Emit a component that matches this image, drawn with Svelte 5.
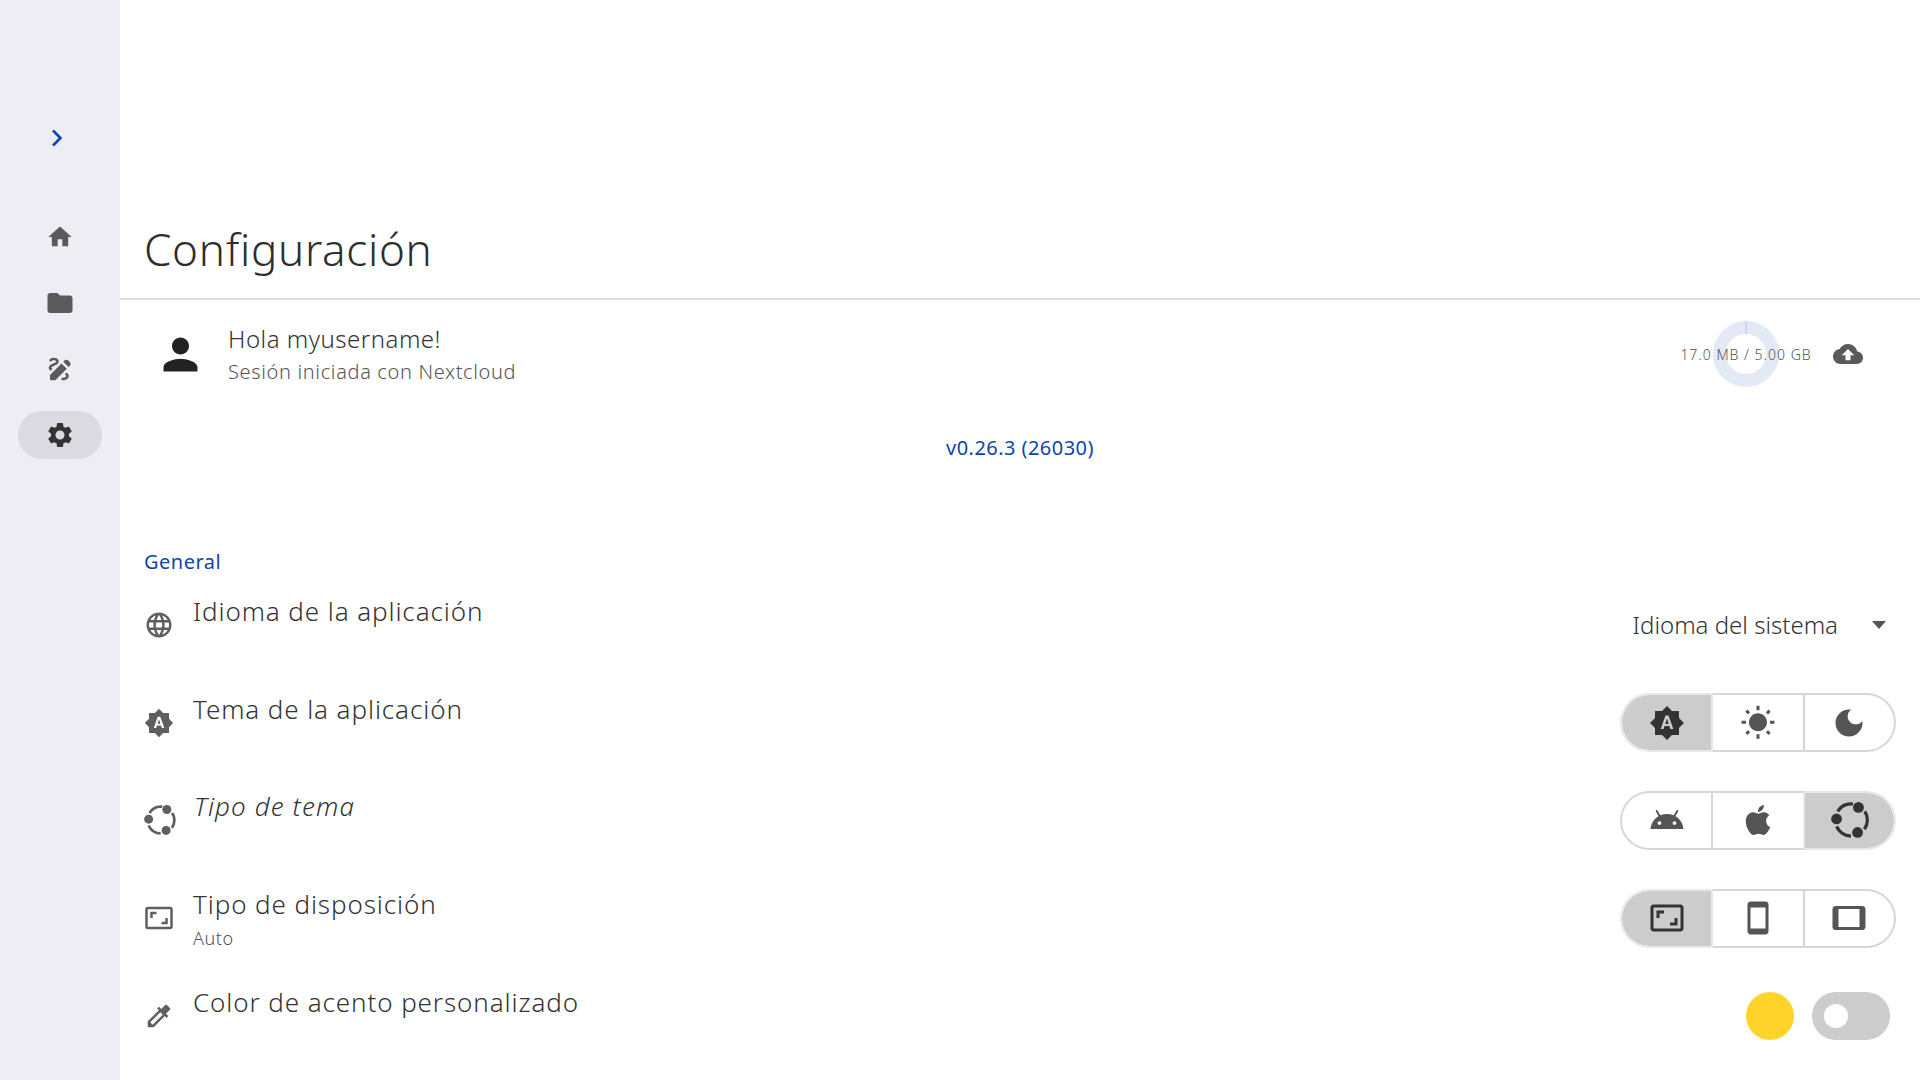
<script>
	const paths = {
		home: 'M10 20v-6h4v6h5v-8h3L12 3 2 12h3v8z',
		folder: 'M10 4H4c-1.1 0-1.99.9-1.99 2L2 18c0 1.1.9 2 2 2h16c1.1 0 2-.9 2-2V8c0-1.1-.9-2-2-2h-8l-2-2z',
		draw: 'M18.85 10.39l1.06-1.06c.78-.78.78-2.05 0-2.83L18.5 5.09c-.78-.78-2.05-.78-2.83 0l-1.06 1.06 4.24 4.24zm-5.66-2.83L4 16.76V21h4.24l9.19-9.19-4.24-4.25zM19 17.5c0 2.19-2.54 3.5-5 3.5-.55 0-1-.45-1-1s.45-1 1-1c1.54 0 3-.73 3-1.5 0-.47-.48-.87-1.23-1.2l1.48-1.48c1.07.63 1.75 1.47 1.75 2.68zM4.58 13.35C3.61 12.79 3 12.06 3 11c0-1.8 1.89-2.63 3.56-3.36C7.59 7.18 9 6.56 9 6c0-.41-.78-1-2-1-1.26 0-1.8.61-1.83.64-.35.41-.98.46-1.4.12-.41-.34-.49-.95-.15-1.38C3.73 4.24 4.76 3 7 3s4 1.32 4 3c0 1.87-1.93 2.72-3.64 3.47C6.42 9.88 5 10.5 5 11c0 .31.43.6 1.07.86l-1.49 1.49z',
		settings: 'M19.14 12.94c.04-.3.06-.61.06-.94 0-.32-.02-.64-.07-.94l2.03-1.58c.18-.14.23-.41.12-.61l-1.92-3.32c-.12-.22-.37-.29-.59-.22l-2.39.96c-.5-.38-1.03-.7-1.62-.94l-.36-2.54c-.04-.24-.24-.41-.48-.41h-3.84c-.24 0-.43.17-.47.41l-.36 2.54c-.59.24-1.13.57-1.62.94l-2.39-.96c-.22-.08-.47 0-.59.22L2.74 8.87c-.12.21-.08.47.12.61l2.03 1.58c-.05.3-.09.63-.09.94s.02.64.07.94l-2.03 1.58c-.18.14-.23.41-.12.61l1.92 3.32c.12.22.37.29.59.22l2.39-.96c.5.38 1.03.7 1.62.94l.36 2.54c.05.24.24.41.48.41h3.84c.24 0 .44-.17.47-.41l.36-2.54c.59-.24 1.13-.56 1.62-.94l2.39.96c.22.08.47 0 .59-.22l1.92-3.32c.12-.22.07-.47-.12-.61l-2.01-1.58zM12 15.6c-1.98 0-3.6-1.62-3.6-3.6s1.62-3.6 3.6-3.6 3.6 1.62 3.6 3.6-1.62 3.6-3.6 3.6z',
		person: 'M12 12c2.21 0 4-1.79 4-4s-1.79-4-4-4-4 1.79-4 4 1.79 4 4 4zm0 2c-2.67 0-8 1.34-8 4v2h16v-2c0-2.66-5.33-4-8-4z',
		cloud: 'M19.35 10.04C18.67 6.59 15.64 4 12 4 9.11 4 6.6 5.64 5.35 8.04 2.34 8.36 0 10.91 0 14c0 3.31 2.69 6 6 6h13c2.76 0 5-2.24 5-5 0-2.64-2.05-4.78-4.65-4.96zM14 13v4h-4v-4H7l5-5 5 5h-3z',
		language: 'M11.99 2C6.47 2 2 6.48 2 12s4.47 10 9.99 10C17.52 22 22 17.52 22 12S17.52 2 11.99 2zm6.93 6h-2.95c-.32-1.25-.78-2.45-1.38-3.56 1.84.63 3.37 1.91 4.33 3.56zM12 4.04c.83 1.2 1.48 2.53 1.91 3.96h-3.82c.43-1.43 1.08-2.76 1.91-3.96zM4.26 14C4.1 13.36 4 12.69 4 12s.1-1.36.26-2h3.38c-.08.66-.14 1.32-.14 2 0 .68.06 1.34.14 2H4.26zm.82 2h2.95c.32 1.25.78 2.45 1.38 3.56-1.84-.63-3.37-1.9-4.33-3.56zm2.95-8H5.08c.96-1.66 2.49-2.93 4.33-3.56C8.81 5.55 8.35 6.75 8.03 8zM12 19.96c-.83-1.2-1.48-2.53-1.91-3.96h3.82c-.43 1.43-1.08 2.76-1.91 3.96zM14.34 14H9.66c-.09-.66-.16-1.32-.16-2 0-.68.07-1.35.16-2h4.68c.09.65.16 1.32.16 2 0 .68-.07 1.34-.16 2zm.25 5.56c.6-1.11 1.06-2.31 1.38-3.56h2.95c-.96 1.65-2.49 2.93-4.33 3.56zM16.36 14c.08-.66.14-1.32.14-2 0-.68-.06-1.34-.14-2h3.38c.16.64.26 1.31.26 2s-.1 1.36-.26 2h-3.38z',
		auto: 'M10.85 12.65h2.3L12 9l-1.15 3.65zM20 8.69V4h-4.69L12 .69 8.69 4H4v4.69L.69 12 4 15.31V20h4.69L12 23.31 15.31 20H20v-4.69L23.31 12 20 8.69zM14.3 16l-.7-2h-3.2l-.7 2H7.8L11 7h2l3.2 9h-1.9z',
		sun: 'M6.76 4.84l-1.8-1.79-1.41 1.41 1.79 1.79 1.42-1.41zM4 10.5H1v2h3v-2zm9-9.95h-2V3.5h2V.55zm7.45 3.91l-1.41-1.41-1.79 1.79 1.41 1.41 1.79-1.79zm-3.21 13.7l1.79 1.8 1.41-1.41-1.8-1.79-1.4 1.4zM20 10.5v2h3v-2h-3zm-8-5c-3.31 0-6 2.69-6 6s2.69 6 6 6 6-2.69 6-6-2.69-6-6-6zm-1 16.95h2V19.5h-2v2.95zm-7.45-3.91l1.41 1.41 1.79-1.8-1.41-1.41-1.79 1.8z',
		moon: 'M12 3c-4.97 0-9 4.03-9 9s4.03 9 9 9 9-4.03 9-9c0-.46-.04-.92-.1-1.36-.98 1.37-2.58 2.26-4.4 2.26-2.98 0-5.4-2.42-5.4-5.4 0-1.81.89-3.42 2.26-4.4-.44-.06-.9-.1-1.36-.1z',
		android: 'M17.6 9.48l1.84-3.18c.16-.31.04-.69-.26-.85-.29-.15-.65-.06-.83.22l-1.88 3.24c-2.86-1.21-6.08-1.21-8.94 0L5.65 5.67c-.19-.29-.58-.38-.87-.2-.28.18-.37.54-.22.83L6.4 9.48C3.3 11.25 1.28 14.44 1 18h22c-.28-3.56-2.3-6.75-5.4-8.52zM7 15.25c-.69 0-1.25-.56-1.25-1.25s.56-1.25 1.25-1.25 1.25.56 1.25 1.25-.56 1.25-1.25 1.25zm10 0c-.69 0-1.25-.56-1.25-1.25s.56-1.25 1.25-1.25 1.25.56 1.25 1.25-.56 1.25-1.25 1.25z',
		apple: 'M18.71 19.5C17.88 20.74 17 21.95 15.66 21.97C14.32 22 13.89 21.18 12.37 21.18C10.84 21.18 10.37 21.95 9.1 22C7.79 22.05 6.8 20.68 5.96 19.47C4.25 17 2.94 12.45 4.7 9.39C5.57 7.87 7.13 6.91 8.82 6.88C10.1 6.86 11.32 7.75 12.11 7.75C12.89 7.75 14.37 6.68 15.92 6.84C16.57 6.87 18.39 7.1 19.56 8.82C19.47 8.88 17.39 10.1 17.41 12.63C17.44 15.65 20.06 16.66 20.09 16.67C20.06 16.74 19.67 18.11 18.71 19.5M13 3.5C13.73 2.67 14.94 2.04 15.94 2C16.07 3.17 15.6 4.35 14.9 5.19C14.21 6.04 13.07 6.7 11.95 6.61C11.8 5.46 12.36 4.26 13 3.5Z',
		aspect: 'M19 12h-2v3h-3v2h5v-5zM7 9h3V7H5v5h2V9zm14-6H3c-1.1 0-2 .9-2 2v14c0 1.1.9 2 2 2h18c1.1 0 2-.9 2-2V5c0-1.1-.9-2-2-2zm0 16.01H3V4.99h18v14.02z',
		phone: 'M17 1.01L7 1c-1.1 0-2 .9-2 2v18c0 1.1.9 2 2 2h10c1.1 0 2-.9 2-2V3c0-1.1-.9-1.99-2-1.99zM17 19H7V5h10v14z',
		tablet: 'M21 4H3c-1.1 0-2 .9-2 2v12c0 1.1.89 2 2 2h18c1.1 0 1.99-.9 1.99-2L23 6c0-1.1-.9-2-2-2zm-2 14H5V6h14v12z',
		colorize: 'M20.71 5.63l-2.34-2.34c-.39-.39-1.02-.39-1.41 0l-3.12 3.12-1.93-1.91-1.41 1.41 1.42 1.42L3 16.25V21h4.75l8.92-8.92 1.42 1.42 1.41-1.41-1.92-1.92 3.12-3.12c.4-.4.4-1.03.01-1.42zM6.92 19L5 17.08l8.06-8.06 1.92 1.92L6.92 19z'
	};

	const nav = [
		{ name: 'home', size: 28 },
		{ name: 'folder', size: 30 },
		{ name: 'draw', size: 30 },
		{ name: 'settings', size: 30 }
	];

	const settings = [
		{ icon: 'language', title: 'Idioma de la aplicación', select: 'Idioma del sistema' },
		{ icon: 'auto', title: 'Tema de la aplicación', seg: ['auto', 'sun', 'moon'], active: 0 },
		{ icon: 'ubuntu', title: 'Tipo de tema', italic: true, seg: ['android', 'apple', 'ubuntu'], active: 2 },
		{ icon: 'aspect', title: 'Tipo de disposición', sub: 'Auto', seg: ['aspect', 'phone', 'tablet'], active: 0 },
		{ icon: 'colorize', title: 'Color de acento personalizado', accent: true }
	];
</script>

{#snippet icon(name, size)}
	<svg class="icon" width={size} height={size} viewBox="0 0 24 24">
		{#if name === 'ubuntu'}
			<path class="arcs" d="M22.57 6.33A10.7 10.7 0 0 1 22.26 18.14M13.31 22.7A10.7 10.7 0 0 1 3.73 16.35M4.43 6.33A10.7 10.7 0 0 1 14.62 1.36" />
			<circle cx="18.3" cy="3.6" r="3.6" />
			<circle cx="3.7" cy="11.3" r="3.6" />
			<circle cx="17.7" cy="20.3" r="3.6" />
		{:else}
			<path d={paths[name]} />
		{/if}
	</svg>
{/snippet}

<div class="app">
	<aside class="rail">
		<button class="expand" aria-label="Expandir">
			<svg width="20" height="20" viewBox="0 0 20 20"><path d="M6 2.5 13.5 10 6 17.5" /></svg>
		</button>
		<nav class="nav">
			{#each nav as item}
				<div class="nav-item" class:current={item.name === 'settings'}>
					{@render icon(item.name, item.size)}
				</div>
			{/each}
		</nav>
	</aside>

	<main class="content">
		<header class="topbar">
			<h1>Configuración</h1>
		</header>

		<section class="account">
			<div class="avatar">{@render icon('person', 51)}</div>
			<div class="who">
				<div class="hello">Hola myusername!</div>
				<div class="session">Sesión iniciada con Nextcloud</div>
			</div>
			<div class="quota">
				<svg class="ring" width="66" height="66" viewBox="0 0 66 66">
					<circle cx="33" cy="33" r="26.5" />
					<path d="M33 0v13" />
				</svg>
				<span>17.0 MB / 5.00 GB</span>
			</div>
			<div class="sync">{@render icon('cloud', 30)}</div>
		</section>

		<div class="version">v0.26.3 (26030)</div>

		<h2 class="group">General</h2>

		{#each settings as row}
			<div class="row">
				<div class="row-icon">{@render icon(row.icon, 30)}</div>
				<div class="copy">
					<div class="title" class:italic={row.italic}>{row.title}</div>
					<div class="sub">{row.sub ?? ''}</div>
				</div>
				{#if row.select}
					<div class="select">
						<span>{row.select}</span>
						<i class="caret"></i>
					</div>
				{:else if row.seg}
					<div class="seg">
						{#each row.seg as s, i}
							<div class="seg-item" class:on={i === row.active}>{@render icon(s, 36)}</div>
						{/each}
					</div>
				{:else if row.accent}
					<div class="accent">
						<span class="swatch"></span>
						<span class="toggle"><span class="knob"></span></span>
					</div>
				{/if}
			</div>
		{/each}
	</main>
</div>

<style>
	:global(body) {
		background: #fff;
		font-family: 'Noto Sans', 'Open Sans', sans-serif;
		font-weight: 300;
		color: #333;
	}

	.app {
		display: flex;
		height: 100vh;
		overflow: hidden;
	}

	.icon {
		display: block;
		fill: currentColor;
		overflow: visible;
	}

	.arcs {
		fill: none;
		stroke: currentColor;
		stroke-width: 2.2;
	}

	.rail {
		width: 120px;
		flex: none;
		background: #eeedf3;
		display: flex;
		flex-direction: column;
		align-items: center;
		padding-top: 114px;
		box-sizing: border-box;
		color: #5a5a5a;
	}

	.expand {
		border: 0;
		background: none;
		padding: 0;
		height: 48px;
		width: 48px;
		display: flex;
		align-items: center;
		justify-content: center;
		margin-left: -6px;
	}

	.expand path {
		fill: none;
		stroke: #0b47a8;
		stroke-width: 2.6;
	}

	.nav {
		margin-top: 51px;
		display: flex;
		flex-direction: column;
		gap: 18px;
	}

	.nav-item {
		width: 84px;
		height: 48px;
		border-radius: 24px;
		display: flex;
		align-items: center;
		justify-content: center;
	}

	.nav-item.current {
		background: #dbdae0;
		color: #333;
	}

	.content {
		flex: 1;
		min-width: 0;
	}

	.topbar {
		display: flex;
		align-items: flex-end;
		padding: 0 24px;
		box-sizing: border-box;
		height: 300px;
		border-bottom: 2px solid #ddd;
	}

	h1 {
		margin: 0 0 19px;
		font-size: 44px;
		line-height: 60px;
		font-weight: 300;
		letter-spacing: 0.7px;
		color: #2e2e2e;
	}

	.account {
		display: flex;
		align-items: center;
		height: 108px;
		padding-right: 57px;
	}

	.avatar {
		margin-left: 35px;
		width: 51px;
		color: #222;
	}

	.who {
		margin-left: 22px;
		margin-top: 2px;
		flex: 1;
	}

	.hello {
		font-size: 24px;
		line-height: 34px;
		letter-spacing: 0.5px;
	}

	.session {
		font-size: 20px;
		line-height: 32px;
		letter-spacing: 0.65px;
		color: #555;
	}

	.quota {
		position: relative;
		width: 66px;
		height: 66px;
		display: flex;
		align-items: center;
		justify-content: center;
		font-size: 14px;
		color: #555;
		white-space: nowrap;
	}

	.quota span {
		position: relative;
		letter-spacing: 1px;
	}

	.ring {
		position: absolute;
		inset: 0;
	}

	.ring circle {
		fill: none;
		stroke: #e4eaf5;
		stroke-width: 13;
	}

	.ring path {
		stroke: #a9c4ea;
		stroke-width: 1;
	}

	.sync {
		margin-left: 54px;
		color: #5a5a5a;
	}

	.version {
		text-align: center;
		font-size: 20px;
		font-weight: 400;
		line-height: 30px;
		letter-spacing: 0.45px;
		margin-top: 25px;
		color: #0b47a8;
	}

	.group {
		margin: 85px 0 0;
		padding-left: 24px;
		font-size: 20px;
		line-height: 28px;
		font-weight: 400;
		letter-spacing: 0.5px;
		color: #0b47a8;
	}

	.row {
		display: flex;
		align-items: center;
		height: 97.75px;
		padding: 0 24px;
		box-sizing: border-box;
	}

	.row-icon {
		width: 30px;
		color: #5f5f5f;
		margin-right: 19px;
	}

	.copy {
		flex: 1;
	}

	.title {
		font-size: 26px;
		line-height: 40px;
		letter-spacing: 0.9px;
	}

	.italic {
		font-style: italic;
		letter-spacing: 1.1px;
		padding-left: 1px;
	}

	.sub {
		font-size: 18px;
		line-height: 28px;
		height: 28px;
		letter-spacing: 0.6px;
		color: #555;
	}

	.select {
		display: flex;
		align-items: center;
		font-size: 24px;
		margin-right: 10px;
	}

	.caret {
		margin-left: 34px;
		width: 0;
		height: 0;
		border: 7px solid transparent;
		border-top: 8px solid #555;
		border-bottom: 0;
	}

	.seg {
		display: flex;
		height: 59px;
		width: 276px;
	}

	.seg-item {
		flex: 1;
		display: flex;
		align-items: center;
		justify-content: center;
		color: #555;
		border: 2px solid #d6d6d6;
		border-left: 0;
	}

	.seg-item:first-child {
		border-left: 2px solid #d6d6d6;
		border-radius: 30px 0 0 30px;
	}

	.seg-item:last-child {
		border-radius: 0 30px 30px 0;
	}

	.seg-item:has(+ .on) {
		border-right-color: #e8e8e8;
	}

	.seg-item.on {
		background: #ccc;
		background-clip: padding-box;
		color: #333;
		border-color: #e8e8e8;
	}

	.accent {
		display: flex;
		align-items: center;
		gap: 18px;
		margin-right: 6px;
	}

	.swatch {
		width: 48px;
		height: 48px;
		border-radius: 50%;
		background: #ffd32a;
	}

	.toggle {
		width: 78px;
		height: 48px;
		border-radius: 24px;
		background: #ccc;
		display: flex;
		align-items: center;
		padding-left: 12px;
		box-sizing: border-box;
	}

	.knob {
		width: 24px;
		height: 24px;
		border-radius: 50%;
		background: #fff;
	}
</style>
